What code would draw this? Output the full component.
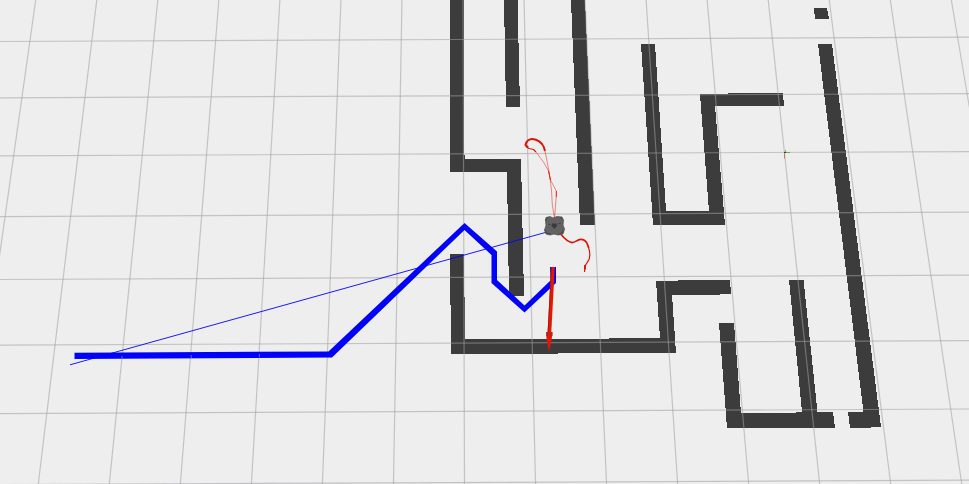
type Segment = [number, number, number, number];

const meridians: Segment[] = Array.from({ length: 16 }, (_, i) => {
  const k = i - 7;
  return [463 + k * 61.04, 0, 464.5 + k * 71.04, 484];
});

const parallels: Segment[] = [
  [0, 41.5, 969, 37.2],
  [0, 97.8, 969, 93.6],
  [0, 155.9, 969, 151.6],
  [0, 216.6, 969, 212.2],
  [0, 279.5, 969, 275.1],
  [0, 345.2, 969, 340.7],
  [0, 413.6, 969, 409],
  [0, 484.6, 969, 480.2],
];

const walls = [
  '450,0 463.5,0 464,155 465,155 465,159 521,159 524,295.6 509,295.6 507,172 450,172',
  '504,0 517.5,0 520,107 506,107',
  '571,0 585,0 595,225 580,225',
  '450,254 464,254 465,339 609,339 609,338 660,338 656,281 678,281 678,280 730,280 731,294 720,294 720,295 672,295 676,353 558,353 558,354 451,354',
  '641,44 655,44 666,211 709,211 700,94 728,94 728,93 783,93 784,106 715,106 725,225 653,225',
  '818,44 832,44 881,427 871,427 871,428 850,428 848,412 863.5,412',
  '719,323 734,323 741,413 796,413 796,412 802,412 789,280 803.5,280 817.5,412 833,412 835,428 727,428',
  '814,8 827,8 829,19 815,19',
];

function Grid() {
  return (
    <g stroke="#a0a0a4" strokeOpacity="0.55" strokeWidth="1.2">
      {[...meridians, ...parallels].map(([x1, y1, x2, y2], i) => (
        <line key={i} x1={x1} y1={y1} x2={x2} y2={y2} />
      ))}
    </g>
  );
}

function PlannedPath() {
  return (
    <g>
      <path d="M70 364.8 546 232.3" fill="none" stroke="#0000ff" strokeWidth="0.9" />
      <polygon
        points="74.5,352.8 328.5,351.4 464.5,223 497,251.5 497,280 524.5,305.5 550.5,280.5 550,267 556,267 556,283 524.5,312.6 491.5,283 491.5,255 464.5,230 332,357.500 74.5,359"
        fill="#0000ff"
      />
      <path
        d="M122 356v3M191.2 355v3M259.4 354v3.500"
        fill="none"
        stroke="#6464d8"
        strokeWidth="1"
      />
    </g>
  );
}

function Trajectories() {
  return (
    <g fill="none" stroke="#dc1400" strokeLinejoin="round">
      <path
        d="M528 147.500 525.500 145C526 141.500 529 138.800 532.500 138.900C537 139.200 542 142.500 543.800 147L545 151"
        strokeWidth="2"
      />
      <path
        d="M545 151 547 161 549.300 173 551.500 190 552.300 205 554.500 218"
        strokeWidth="0.8"
        strokeOpacity="0.6"
      />
      <path d="M526 146.500 529 148.500 533.500 149.500 536 152" strokeWidth="1.2" />
      <path
        d="M536 152 543.500 162 548.500 171 550.500 180 556.300 191 556 200 554.500 218"
        strokeWidth="0.8"
        strokeOpacity="0.6"
      />
      <path
        d="M548.500 171 550.500 180M556.400 191V197"
        strokeWidth="1"
        strokeOpacity="0.75"
      />
      <path
        d="M561 234.500C564 238 568 242 572 242.600C576 242.500 577 239.500 580.500 239.300C586 239 587.500 244 588.700 248"
        strokeWidth="1.7"
      />
      <path
        d="M588.700 248C590.500 254 590 259 587.500 262L585 266 584.500 272"
        strokeWidth="1.200"
      />
      <path d="M585 265V269.500" strokeWidth="1.8" />
    </g>
  );
}

function Drone() {
  return (
    <g>
      <path
        d="M546 217.500 550 216.600 553 218 557 216.600 562 217 563.500 220 563 225 564.500 229 563 234 558 235 554 234 550 235 546 234 544.500 230 546 225.500 545.500 220Z"
        fill="#626262"
        stroke="#505050"
        strokeWidth="0.8"
      />
      <path
        d="M546 221v-2l2-1.500M560 217.500l2.500 1.500M545 230l2 3.500 4 .5M558 234.500l4-1.500 1.500-3M548 224l3 1M558 224l3-1"
        fill="none"
        stroke="#484848"
        strokeWidth="1"
      />
      <path d="M552 223.500 556.500 223.500 557 226 554.500 229 551.500 226Z" fill="#3b3b3b" />
    </g>
  );
}

function GoalArrow() {
  return (
    <g>
      <path d="M551.200 267H554.800L551.200 334H547.500Z" fill="#e61700" />
      <path d="M551.500 267 548 334" stroke="#a31a0b" strokeWidth="0.900" />
      <path d="M546.300 332H552.300L552 337 549 352 546.300 337Z" fill="#e61700" />
      <path d="M546.300 332h2v4h-2zM551 332h1.500v4H551z" fill="#963023" />
    </g>
  );
}

function OriginAxes() {
  return (
    <g fill="none" strokeWidth="1">
      <path d="M784.500 153V158.500" stroke="#d87070" />
      <path d="M785 152.500H790" stroke="#35c535" />
      <path d="M784 152.500H786" stroke="#254c38" />
      <path d="M785.500 150V152" stroke="#9494a8" />
    </g>
  );
}

export default function App() {
  return (
    <main className="min-h-screen w-full overflow-hidden bg-[#eeeeee]">
      <svg
        className="block h-auto w-full"
        viewBox="0 0 969 484"
        role="img"
        aria-label="Robot navigation map"
      >
        <g fill="#3c3c3c" shapeRendering="crispEdges">
          {walls.map((points) => (
            <polygon key={points} points={points} />
          ))}
        </g>
        <Grid />
        <PlannedPath />
        <Trajectories />
        <Drone />
        <GoalArrow />
        <OriginAxes />
      </svg>
    </main>
  );
}
